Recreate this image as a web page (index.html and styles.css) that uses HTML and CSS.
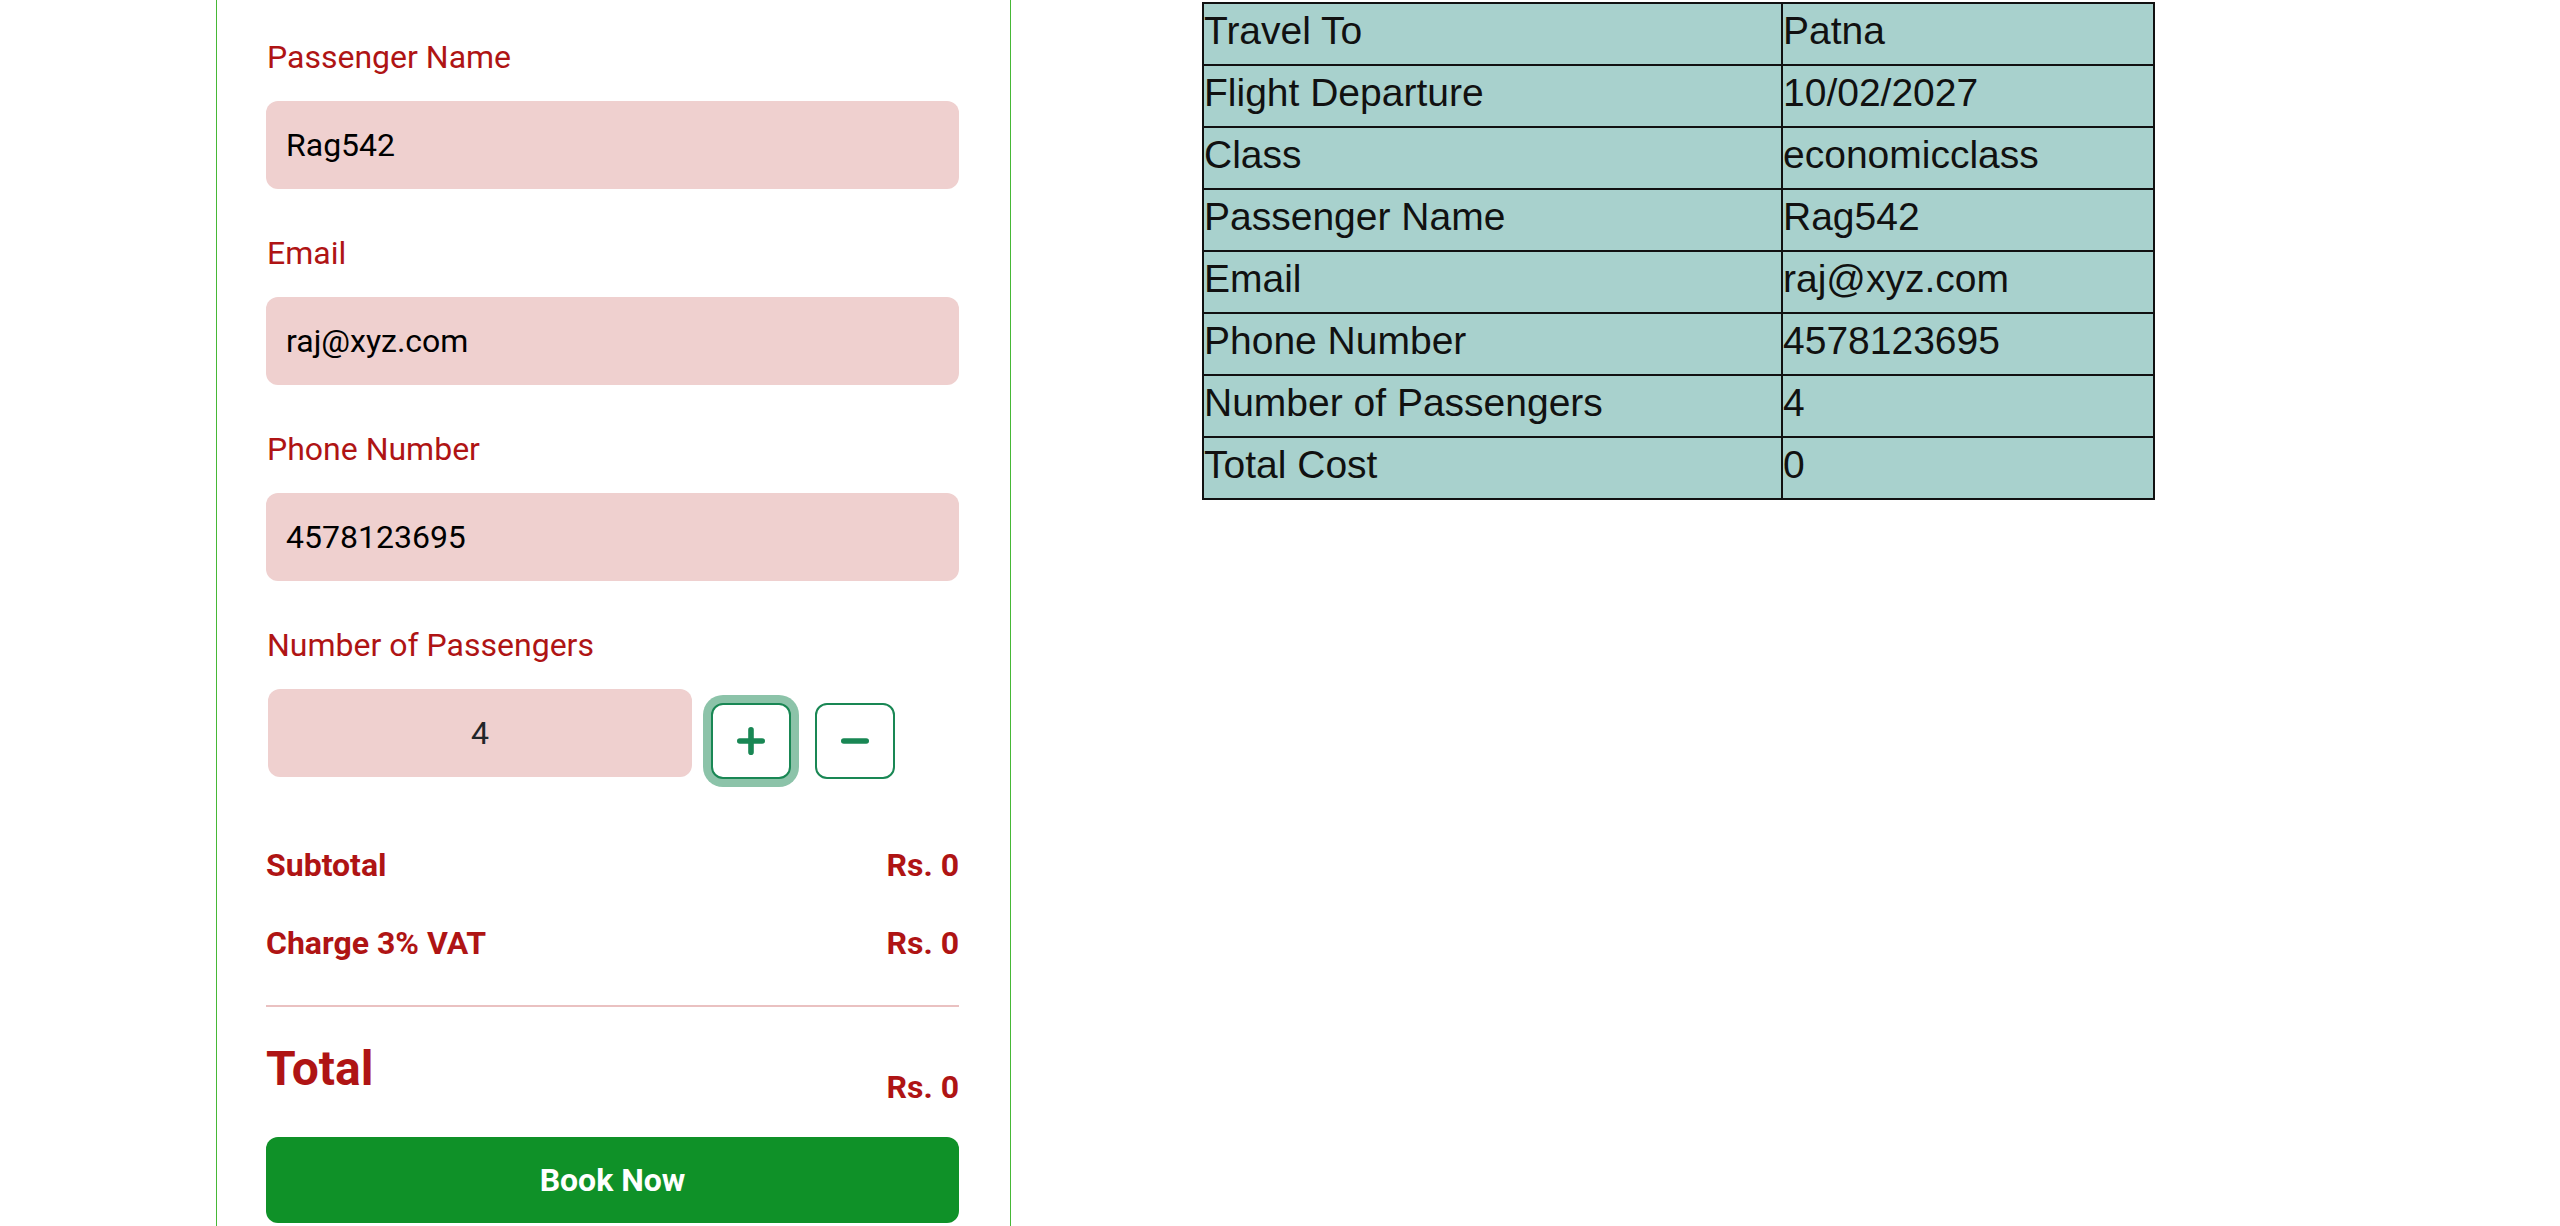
FILE: index.html
```html
<!DOCTYPE html>
<html lang="en">
<head>
<meta charset="utf-8">
<title>Flight Booking</title>
<link rel="stylesheet" href="styles.css">
</head>
<body>
<div class="page">
  <section class="card">
    <div class="field">
      <div class="label">Passenger Name</div>
      <div class="input">Rag542</div>
    </div>
    <div class="field">
      <div class="label">Email</div>
      <div class="input">raj@xyz.com</div>
    </div>
    <div class="field">
      <div class="label">Phone Number</div>
      <div class="input">4578123695</div>
    </div>
    <div class="field">
      <div class="label">Number of Passengers</div>
      <div class="qty-row">
        <div class="input qty">4</div>
        <button class="step focus" type="button" aria-label="Add passenger">
          <svg viewBox="0 0 28 28" class="ico"><path d="M14 2.8V25.2M2.8 14H25.2"/></svg>
        </button>
        <button class="step minus" type="button" aria-label="Remove passenger">
          <svg viewBox="0 0 28 28" class="ico"><path d="M2.8 14H25.2"/></svg>
        </button>
      </div>
    </div>
    <div class="summary">
      <div class="line"><span>Subtotal</span><span>Rs. 0</span></div>
      <div class="line"><span>Charge 3% VAT</span><span>Rs. 0</span></div>
      <div class="divider"></div>
      <div class="total-row"><h4 class="total">Total</h4><span class="total-val">Rs. 0</span></div>
      <button class="book" type="button">Book Now</button>
    </div>
  </section>
  <div class="details">
    <table class="info">
      <colgroup><col class="c1"><col class="c2"></colgroup>
      <tbody>
        <tr><td>Travel To</td><td>Patna</td></tr>
        <tr><td>Flight Departure</td><td>10/02/2027</td></tr>
        <tr><td>Class</td><td>economicclass</td></tr>
        <tr><td>Passenger Name</td><td>Rag542</td></tr>
        <tr><td>Email</td><td>raj@xyz.com</td></tr>
        <tr><td>Phone Number</td><td>4578123695</td></tr>
        <tr><td>Number of Passengers</td><td>4</td></tr>
        <tr><td>Total Cost</td><td>0</td></tr>
      </tbody>
    </table>
  </div>
</div>
</body>
</html>
```
FILE: styles.css
```css
* { box-sizing: border-box; }
html, body { margin: 0; padding: 0; background: #fff; }
body { font-family: Roboto, "Liberation Sans", Arial, sans-serif; overflow: hidden; }

.page {
  display: flex;
  align-items: flex-start;
  padding-left: 216px;
  gap: 191px;
}

.card {
  width: 795px;
  flex: none;
  border-left: 1px solid #46b836;
  border-right: 1px solid #46b836;
  padding: 38px 51px 80px 49px;
}

.field { margin-bottom: 45px; }

.label {
  font-size: 32px;
  line-height: 38px;
  color: #af1414;
  margin-bottom: 25px;
  padding-left: 1px;
}

.input {
  height: 88px;
  background: #efd0cf;
  border-radius: 12px;
  padding: 0 20px;
  font-size: 32px;
  color: #000;
  display: flex;
  align-items: center;
}

.qty-row {
  display: flex;
  align-items: flex-start;
}
.qty {
  width: 424px;
  margin-left: 2px;
  justify-content: center;
  color: #212529;
}

.step {
  width: 80px;
  height: 76px;
  margin-top: 14px;
  margin-left: 19px;
  border: 2px solid #198754;
  border-radius: 12px;
  background: #fff;
  display: flex;
  align-items: center;
  justify-content: center;
  padding: 0;
}
.step.minus { margin-left: 24px; }
.step.focus { box-shadow: 0 0 0 8px rgba(25, 135, 84, 0.5); }
.ico {
  width: 28px;
  height: 28px;
  fill: none;
  stroke: #198754;
  stroke-width: 5.6;
  stroke-linecap: round;
}

.summary { padding-top: 22px; }

.line {
  display: flex;
  justify-content: space-between;
  font-size: 32px;
  line-height: 38px;
  font-weight: 700;
  color: #af1414;
  margin-bottom: 40px;
}
.line + .line { margin-bottom: 43px; }

.divider { height: 2px; background: #eac1c1; }

.total-row {
  display: flex;
  justify-content: space-between;
  align-items: flex-start;
  margin-top: 33px;
  color: #af1414;
}
.total {
  margin: 0;
  font-size: 48px;
  line-height: 58px;
  font-weight: 700;
}
.total-val {
  font-size: 32px;
  line-height: 38px;
  font-weight: 700;
  margin-top: 28px;
}

.book {
  display: block;
  width: 100%;
  height: 86px;
  margin-top: 31px;
  border: 0;
  border-radius: 12px;
  background: #0f9128;
  color: #fff;
  font-family: Roboto, "Liberation Sans", Arial, sans-serif;
  font-size: 32px;
  font-weight: 700;
}

.details { padding-top: 2px; }

.info {
  width: 953px;
  border-collapse: collapse;
  table-layout: fixed;
  font-family: "Liberation Sans", Arial, sans-serif;
  font-size: 39px;
  color: #111;
}
.info .c1 { width: 579px; }
.info td {
  border: 2px solid #111;
  background: #a8d1cd;
  line-height: 45px;
  padding: 4px 0 11px;
  vertical-align: top;
  white-space: nowrap;
}
```
